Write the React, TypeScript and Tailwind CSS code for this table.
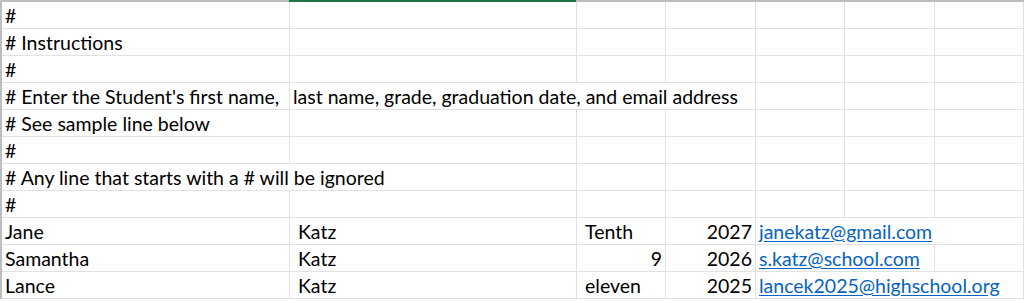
import React from 'react';

type Cell = {
  text?: string;
  span?: number;
  align?: 'left' | 'right';
  link?: boolean;
  indent?: boolean;
};

// ancho de cada columna (con el borde derecho incluido)
const colWidths = [288, 287, 89, 90, 89, 90, 89];

const rows: Cell[][] = [
  [{ text: '#' }, {}, {}, {}, {}, {}, {}],
  [{ text: '# Instructions' }, {}, {}, {}, {}, {}, {}],
  [{ text: '#' }, {}, {}, {}, {}, {}, {}],
  [
    { text: "# Enter the Student's first name," },
    { text: 'last name, grade, graduation date, and email address', span: 3 },
    {},
    {},
    {},
  ],
  [{ text: '# See sample line below' }, {}, {}, {}, {}, {}, {}],
  [{ text: '#' }, {}, {}, {}, {}, {}, {}],
  [{ text: '# Any line that starts with a # will be ignored', span: 2 }, {}, {}, {}, {}, {}],
  [{ text: '#' }, {}, {}, {}, {}, {}, {}],
  [
    { text: 'Jane' },
    { text: 'Katz', indent: true },
    { text: 'Tenth', indent: true },
    { text: '2027', align: 'right' },
    { text: 'janekatz@gmail.com', link: true, span: 3 },
  ],
  [
    { text: 'Samantha' },
    { text: 'Katz', indent: true },
    { text: '9', align: 'right' },
    { text: '2026', align: 'right' },
    { text: 's.katz@school.com', link: true, span: 2 },
    {},
  ],
  [
    { text: 'Lance' },
    { text: 'Katz', indent: true },
    { text: 'eleven', indent: true },
    { text: '2025', align: 'right' },
    { text: 'lancek2025@highschool.org', link: true, span: 3 },
  ],
];

const SheetRow = ({ cells }: { cells: Cell[] }) => {
  let col = 0;
  return (
    <div className="flex h-[27px] border-b border-[#e1e1e1]">
      {cells.map((c, i) => {
        const span = c.span ?? 1;
        const w = colWidths.slice(col, col + span).reduce((a, b) => a + b, 0);
        col += span;
        return (
          <div
            key={i}
            style={{ width: w }}
            className={`flex shrink-0 items-end border-r border-[#e1e1e1] pb-[3px] whitespace-nowrap overflow-visible text-[19.5px] leading-none ${
              c.align === 'right' ? 'justify-end pr-[3px]' : c.indent ? 'pl-[8px]' : 'pl-[3px]'
            }`}
          >
            {c.link ? (
              <span className="text-[#0563c1] underline underline-offset-2">{c.text}</span>
            ) : (
              <span className="text-black">{c.text}</span>
            )}
          </div>
        );
      })}
    </div>
  );
};

export default function App() {
  return (
    <div className="w-[1024px] h-[301px] overflow-hidden bg-white font-['Lato',sans-serif]">
      <div className="flex h-[2px]">
        <div className="w-[289px] bg-[#bdbdbd]" />
        <div className="w-[287px] bg-[#217346]" />
        <div className="flex-1 bg-[#bdbdbd]" />
      </div>
      <div className="border-l-2 border-[#bdbdbd]">
        {rows.map((r, i) => (
          <SheetRow key={i} cells={r} />
        ))}
      </div>
    </div>
  );
}
